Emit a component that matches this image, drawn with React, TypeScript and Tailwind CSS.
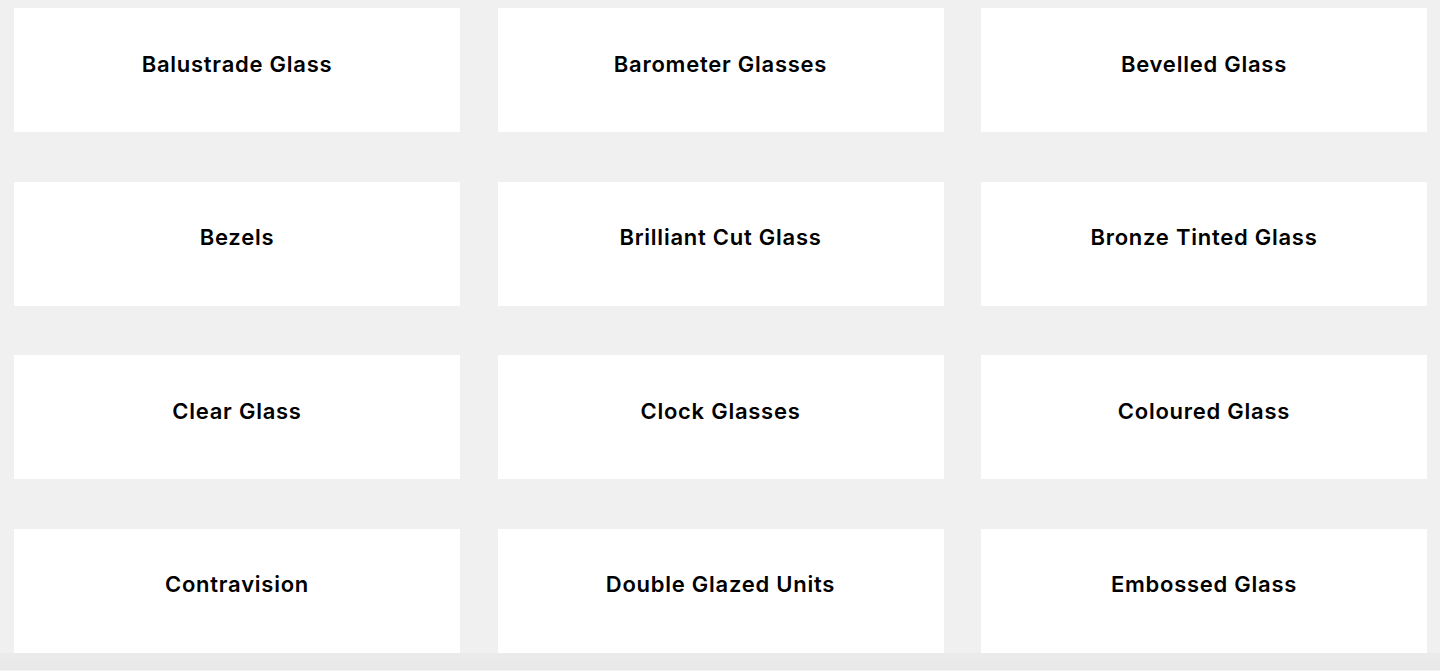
import React from "react";

const items = [
  "Balustrade Glass",
  "Barometer Glasses",
  "Bevelled Glass",
  "Bezels",
  "Brilliant Cut Glass",
  "Bronze Tinted Glass",
  "Clear Glass",
  "Clock Glasses",
  "Coloured Glass",
  "Contravision",
  "Double Glazed Units",
  "Embossed Glass",
];

export default function App() {
  return (
    <div className="min-h-[671px] bg-[#f0f0f0] flex flex-col" style={{ fontFamily: "Inter, 'Noto Sans', sans-serif" }}>
      <div className="grid grid-cols-3 gap-x-[37.5px] gap-y-[49.67px] pl-[14px] pr-[13px] pt-[8px]">
        {items.map((t) => (
          <div key={t} className="h-[124px] bg-white flex items-center justify-center pb-[12px]">
            <span className="text-[22px] font-semibold text-black tracking-[0.75px]">{t}</span>
          </div>
        ))}
      </div>
      <div className="h-[17px] bg-gradient-to-b from-[#ebebeb] to-[#e8e8e8]" />
      <div className="h-[1px] bg-[#f2f2f2]" />
    </div>
  );
}
